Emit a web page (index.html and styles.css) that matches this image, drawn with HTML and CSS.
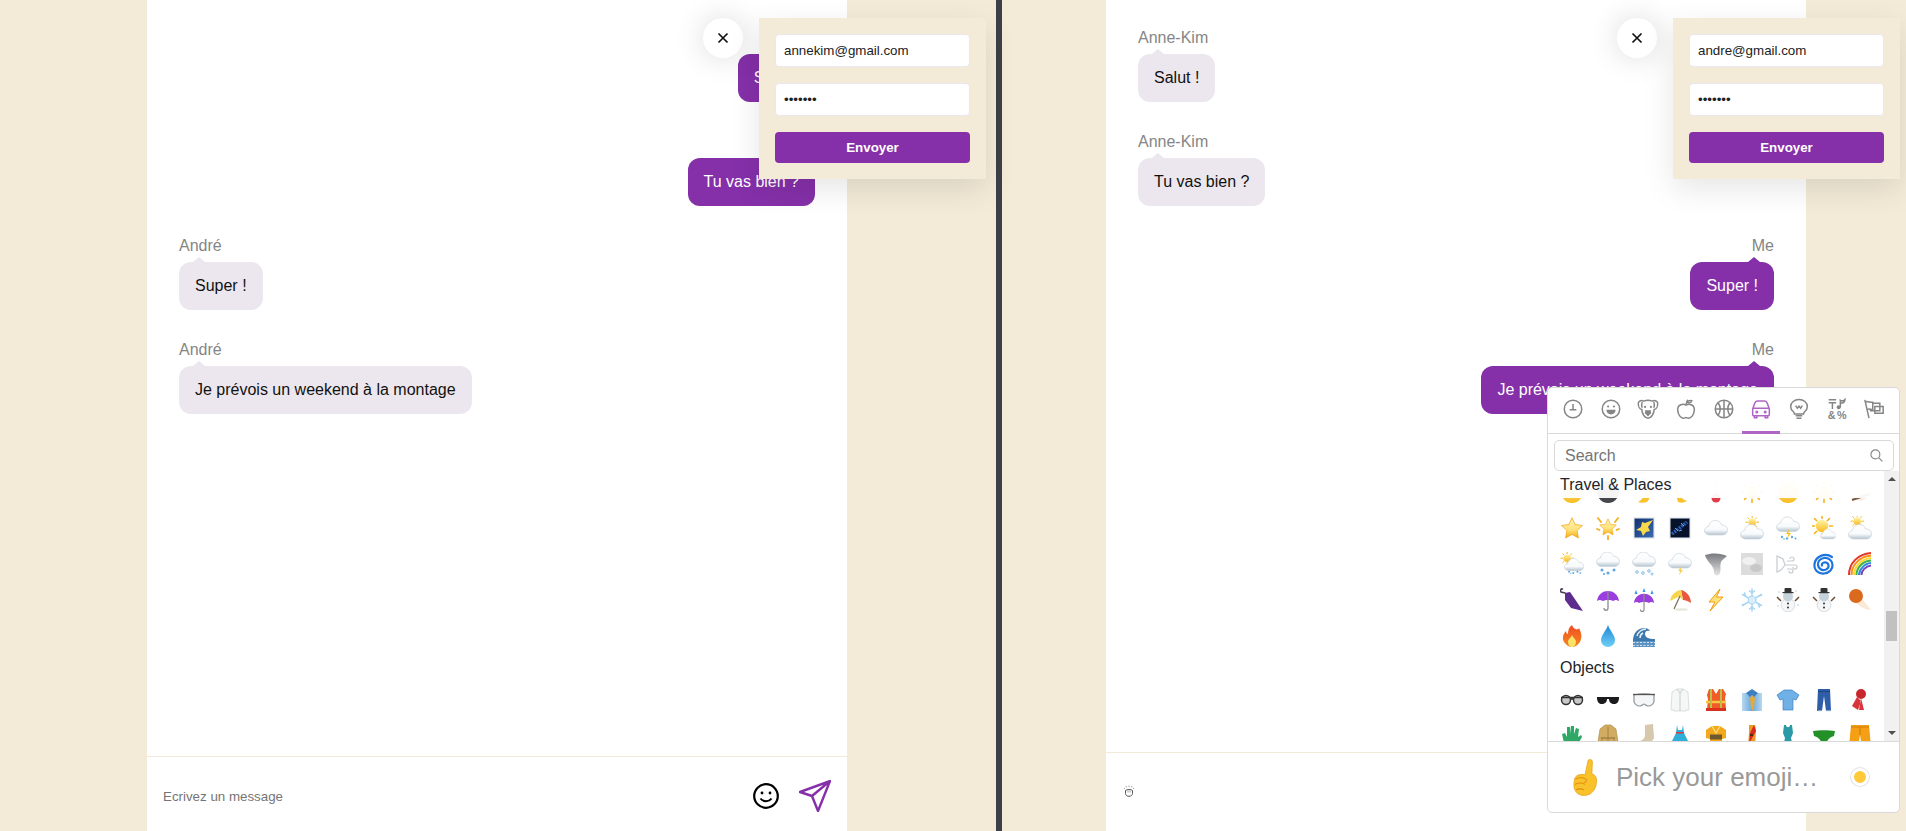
FILE: index.html
```html
<!DOCTYPE html>
<html lang="fr">
<head>
    <meta charset="UTF-8">
    <meta name="viewport" content="width=device-width, initial-scale=1.0">
    <title>Chat</title>
    <link rel="stylesheet" href="styles.css">
</head>
<body>
    <svg class="sprites" aria-hidden="true">
        <defs>
            <linearGradient id="g-cloud" x1="0" y1="0" x2="0" y2="1"><stop offset="0" stop-color="#fff"/><stop offset=".65" stop-color="#f8fafb"/><stop offset="1" stop-color="#b4c4d0"/></linearGradient>
            <linearGradient id="g-star" x1="0" y1="0" x2="0" y2="1"><stop offset="0" stop-color="#fff2b8"/><stop offset=".6" stop-color="#ffe27a"/><stop offset="1" stop-color="#f7a90f"/></linearGradient>
            <linearGradient id="g-sun" x1="0" y1="0" x2="0" y2="1"><stop offset="0" stop-color="#fff3a6"/><stop offset="1" stop-color="#f8bb1d"/></linearGradient>
            <linearGradient id="g-night" x1="0" y1="0" x2="1" y2="1"><stop offset="0" stop-color="#12306e"/><stop offset="1" stop-color="#3a6cb4"/></linearGradient>
            <linearGradient id="g-fire" x1="0" y1="0" x2="0" y2="1"><stop offset="0" stop-color="#ef4b23"/><stop offset="1" stop-color="#f58a1f"/></linearGradient>
            <linearGradient id="g-drop" x1="0" y1="0" x2="0" y2="1"><stop offset="0" stop-color="#1f86d8"/><stop offset="1" stop-color="#6fd0f5"/></linearGradient>
            <linearGradient id="g-shirt" x1="0" y1="0" x2="1" y2="0"><stop offset="0" stop-color="#b7d8ef"/><stop offset=".5" stop-color="#6aa8dc"/><stop offset="1" stop-color="#b7d8ef"/></linearGradient>
            <linearGradient id="g-tornado" x1="0" y1="0" x2="0" y2="1"><stop offset="0" stop-color="#77797d"/><stop offset="1" stop-color="#e4e5e6"/></linearGradient>

            <path id="cloud" d="M6 20.500c-3 0-5.500-1.800-5.500-4.300 0-2.200 1.700-3.900 4-4.200C5 8.500 8 6 11.200 6c3.200 0 5.600 1.800 6.500 4.500.3-.1.500-.1.800-.1 2.800 0 5 2.200 5 5 0 2.900-2.300 5.100-5.300 5.100z" fill="url(#g-cloud)" stroke="#c8d3db" stroke-width=".7"/>
            <g id="sun">
                <g stroke="#f6b21b" stroke-width="1.600" stroke-linecap="round"><path d="M12 1.500v3M12 19.500v3M1.500 12h3M19.500 12h3M4.600 4.600l2.100 2.100M17.300 17.300l2.100 2.100M4.600 19.400l2.100-2.100M17.300 6.700l2.100-2.100"/></g>
                <circle cx="12" cy="12" r="6.200" fill="url(#g-sun)"/>
            </g>
            <path id="star" d="M12 1.800l3.100 6.700 7.300 1-5.300 5.100 1.300 7.300L12 18.400l-6.400 3.500 1.300-7.300-5.300-5.100 7.300-1z" fill="url(#g-star)" stroke="#f2a81c" stroke-width=".8"/>
            <g id="rain"><g fill="#62a8e4"><circle cx="6" cy="21" r="1.200"/><circle cx="11" cy="22.500" r="1.200"/><circle cx="16" cy="21" r="1.200"/><circle cx="19.500" cy="22.500" r="1"/><circle cx="8" cy="23" r=".8"/></g></g>

            <circle id="moon-full" cx="12" cy="12" r="11" fill="url(#g-sun)"/>
            <circle id="moon-new" cx="12" cy="12" r="11" fill="#45464c"/>
            <path id="moon-a" d="M14 1c6 2 8 13 1 21-3 1-7 1-9 0 6-3 10-11 8-21z" fill="#f8c32b"/>
            <path id="moon-b" d="M9 1c-1 8 3 18 10 20-3 2-6 2-9 1C8 16 5 7 9 1z" fill="#f8c32b"/>
            <g id="thermo"><rect x="9.500" y="1" width="5" height="16" fill="#f3ecec"/><circle cx="12" cy="18" r="4.500" fill="#e23b49"/></g>
            <g id="planet"><circle cx="12" cy="12" r="9" fill="#f5efe9"/><path d="M4 20L22 14" stroke="#7a5a41" stroke-width="2.200"/></g>

            <g id="glow"><use href="#star" transform="translate(2.400 1.400) scale(.8)"/><path d="M2 2l3 4M22 2l-3 4M12 20v3.500M1 13l2.500 1M23 13l-2.500 1" stroke="#f6ae1b" stroke-width="1.800" stroke-linecap="round"/></g>
            <g id="night"><rect x="1" y="1" width="22" height="22" fill="#edf0f3"/><rect x="2.500" y="2.500" width="19" height="19" fill="url(#g-night)"/><path d="M21 4l-8 3-3-1-1 5-5 3 5 1 2 5 3-4 4-1-2-4z" fill="#f7d94a"/></g>
            <g id="milky"><rect x="1" y="1" width="22" height="22" fill="#edf0f3"/><rect x="2.500" y="2.500" width="19" height="19" fill="#06122c"/><path d="M4 18L19 6" stroke="#2b5fb0" stroke-width="3.500" stroke-dasharray="2 1"/><path d="M7 12l3 3M13 7l3 3M11 15l3-1" stroke="#6ea2e8" stroke-width="1"/></g>
            <use id="cloud-only" href="#cloud" transform="translate(0 -1.500)"/>
            <g id="sun-cloud"><use href="#sun" transform="translate(5 -1) scale(.6)"/><use href="#cloud" transform="translate(0 2.500)"/></g>
            <g id="storm"><use href="#cloud" transform="translate(0 -5)"/><use href="#rain"/><path d="M13 13l-3 5h2.500l-1.500 5 4-6h-2.500z" fill="#f8c21d"/></g>
            <g id="sun-small"><use href="#sun" transform="translate(-2 -2) scale(1)"/><use href="#cloud" transform="translate(8 9) scale(.68)"/></g>
            <g id="sun-big-cloud"><use href="#sun" transform="translate(2 -2) scale(.6)"/><use href="#cloud" transform="translate(0 2.500)"/></g>

            <g id="sun-rain"><use href="#sun" transform="translate(0 -1) scale(.6)"/><use href="#cloud" transform="translate(4 1.500) scale(.84)"/><use href="#rain" transform="translate(4 2) scale(.84)"/></g>
            <g id="snow-cloud"><use href="#cloud" transform="translate(0 -6)"/><g fill="#5aa6e6"><circle cx="6" cy="18" r="1.500"/><circle cx="12" cy="21" r="1.500"/><circle cx="18" cy="18" r="1.500"/><circle cx="8" cy="22" r="1"/></g></g>
            <g id="sleet-cloud"><use href="#cloud" transform="translate(0 -6)"/><g fill="none" stroke="#86bde8" stroke-width="1"><circle cx="5" cy="20" r="1.300"/><circle cx="11" cy="21" r="1.300"/><circle cx="17" cy="19" r="1.300"/><circle cx="20" cy="22" r="1"/></g></g>
            <g id="light-cloud"><use href="#cloud" transform="translate(0 -4.500)"/><path d="M13 15l-3 4h2l-1 4 4-5h-2z" fill="#f7cf5c"/></g>
            <path id="tornado" d="M1 3c6-2.500 17-2 22 1-3 3-6 4-6.500 8-.4 4 1 7-1.500 11-3 1-5 0-5-3 0-4-2-6-4.500-9C3.500 8 1.500 6 1 3z" fill="url(#g-tornado)"/>
            <g id="fog"><rect x="1" y="1" width="22" height="22" fill="#dcdcdc"/><ellipse cx="9" cy="9" rx="7" ry="4" fill="#f0f0f0"/><ellipse cx="16" cy="16" rx="6" ry="4" fill="#c8c8c8"/></g>
            <g id="wind" fill="none" stroke="#c7ccd1" stroke-width="1.200"><path d="M1 4l6 3 2 6-4 5-4 2zM11 9h5a2 2 0 1 0-2-2M9 13h10a2 2 0 1 1-2 2M11 17h4a2 2 0 1 1-2 2"/></g>
            <path id="cyclone" d="M20 5C14 1 4 3 2.500 12c-.8 6 4 10 9.500 9.500s9-4.500 8.500-9c-.5-4.500-4.500-7-8.500-6.500s-6.500 3.500-6 7 3.500 5.500 6.500 5 4.500-3 4-5-2.500-3-4.500-2.500-2.500 2-2 3" fill="none" stroke="#1c74dd" stroke-width="2.200" stroke-linecap="round"/>
            <g id="rainbow" fill="none" stroke-width="2"><path d="M1 23C1 11 10 2 23 1" stroke="#e5352b"/><path d="M3.500 23C3.500 13 11.500 4.500 23 3.500" stroke="#f79420"/><path d="M6 23C6 15 13 7 23 6" stroke="#fbd92a"/><path d="M8.500 23C8.500 16 14.500 9 23 8.500" stroke="#3fb24a"/><path d="M11 23C11 18 16 11.500 23 11" stroke="#2f8ae0"/><path d="M13.500 23C13.500 19 17.500 14 23 13.500" stroke="#7a45b8"/></g>

            <g id="closed-umbrella"><path d="M5 5l5-1 13 19-12-3-6-8z" fill="#5e2c8f"/><path d="M5 5L1 4c-1-2 0-3.500 1.500-3" fill="none" stroke="#4c3b58" stroke-width="1.500" stroke-linecap="round"/></g>
            <g id="umbrella"><path d="M1 13C2 6 7 3 12 3s10 3 11 10c-3-1.500-4-1.500-5.500 0-2-1.500-8-1.500-11 0C5 11.500 3 11.500 1 13z" fill="#9b3ee0"/><path d="M12 3v17c0 3-4 3-4 0" fill="none" stroke="#8d8d8d" stroke-width="1.300"/></g>
            <g id="umbrella-rain"><use href="#umbrella" transform="translate(1 3) scale(.92)"/><g fill="#3d94e8"><path d="M4 2L2.500 6h3zM12 0l-1.500 4h3zM20 2l-1.500 4h3z"/></g></g>
            <g id="beach"><path d="M2 13C3 6 9 2 13 2l-3 7z" fill="#f7d44a"/><path d="M13 2c5 1 10 6 10 13-3-2-6-3-8-3z" fill="#e9573f"/><path d="M10 9l3-7 2 10c-2-2-3-3-5-3z" fill="#f7d44a"/><path d="M12 8L6 21" stroke="#7a6a55" stroke-width="1.200"/><ellipse cx="13" cy="21.500" rx="7" ry="1.300" fill="#e8e6df"/></g>
            <path id="zap" d="M16 1L5 14h6L6 23 19 9h-6.500z" fill="#fde37a" stroke="#f39c12"/>
            <g id="flake" stroke="#a9d6f2" stroke-width="1.600" stroke-linecap="round"><path d="M12 1v22M2.500 6.500l19 11M2.500 17.500l19-11M12 5l-2.500-2M12 5l2.500-2M12 19l-2.500 2M12 19l2.500 2M5.500 8l-.8-3M18.500 16l.8 3M5.500 16l-3 .7M18.500 8l3-.7"/><circle cx="12" cy="12" r="4" fill="#d8eefa" stroke-width="1"/></g>
            <g id="snowman"><path d="M5 13L1 9M19 13l4-4" stroke="#6b4a2f" stroke-width="1.500"/><circle cx="12" cy="17" r="6.800" fill="#f4f6f8" stroke="#c3ccd4" stroke-width=".6"/><circle cx="12" cy="8.500" r="5" fill="#c6d2da"/><rect x="8.500" y="0" width="7" height="4.500" rx="1" fill="#333"/><rect x="6.500" y="4" width="11" height="1.200" fill="#333"/><circle cx="12" cy="15.500" r="1" fill="#333"/><circle cx="12" cy="19.500" r="1" fill="#333"/></g>
            <g id="snowman-snow"><use href="#snowman"/><g fill="#a9d0ee"><circle cx="3" cy="4" r=".8"/><circle cx="20" cy="3" r=".8"/><circle cx="2" cy="18" r=".8"/><circle cx="22" cy="17" r=".8"/></g></g>
            <g id="comet"><path d="M7 2l16 20c-7 0-16-6-19-13z" fill="#fbe9d6"/><circle cx="8" cy="8" r="7" fill="#d96a1e"/></g>

            <g id="fire"><path d="M12 1c1 4 6 6 7 3 3 6 3 10 1 14-2 3-5 5-8 5s-6-2-8-5C2 14 3 10 6 7c0 2 1 3 2 3 0-4 1-7 4-9z" fill="url(#g-fire)"/><path d="M12 11c1 3 4 4 4 7s-2 5-4 5-4-2-4-5 3-4 4-7z" fill="#fde36a"/></g>
            <path id="drop" d="M12 1c2 6 7 10 7 15a7 7 0 0 1-14 0c0-5 5-9 7-15z" fill="url(#g-drop)"/>
            <g id="wave"><rect x="1" y="15" width="22" height="8" fill="#5d93c2"/><path d="M1 17c0-8 5-13 11-13 3 0 5 1 6 3-3-1-5 0-5 3 0 3 3 5 10 5v2z" fill="#3f78ac"/><path d="M5 12c1-4 5-7 9-7M8 14c0-2 1-4 3-5" fill="none" stroke="#e7f0f6" stroke-width="1.500"/><path d="M1 18.500h22M1 21.500h22" stroke="#d4e5f1" stroke-dasharray="2 1.500"/></g>

            <g id="glasses"><circle cx="6" cy="12" r="4.500" fill="#c8c8c8" stroke="#333" stroke-width="1.500"/><circle cx="18" cy="12" r="4.500" fill="#c8c8c8" stroke="#333" stroke-width="1.500"/><path d="M1 9.500h22M10 11h4" stroke="#333" stroke-width="1.500"/></g>
            <g id="sunglasses"><path d="M1 9h22v1.500c-.5 4-2 5.500-5 5.500-3.500 0-5-2.500-5-5h-2c0 2.500-1.500 5-5 5-3 0-4.500-1.500-5-5.500z" fill="#1c1c1e"/></g>
            <g id="goggles"><path d="M2 7c6-1.500 14-1.500 20 0v6c0 3-3 5-6 5-2 0-3-2-4-2s-2 2-4 2c-3 0-6-2-6-5z" fill="#f4f7f8" stroke="#8f9498" stroke-width="1.200"/><path d="M1 6.500h22" stroke="#555" stroke-width="1.300"/></g>
            <g id="coat-white"><path d="M9 1h6l5 3 1 18h-3v1H6v-1H3L4 4z" fill="#f5f6f6" stroke="#d4d7d9" stroke-width=".8"/><path d="M12 5v18M9 1l3 4 3-4" fill="none" stroke="#bfc3c6" stroke-width=".8"/></g>
            <g id="vest"><path d="M5 1l4 0 3 5 3-5h4l3 5-1 4 1 11-9 1-1-1-9 1 1-11-1-4z" fill="#f25a27"/><path d="M2 14h20" stroke="#f9c642" stroke-width="2.500"/><path d="M7 1v21M17 1v21" stroke="#b9c24a" stroke-width="2"/><rect x="2" y="20" width="20" height="3" fill="#d8321f"/></g>
            <g id="shirt"><rect x="2" y="5" width="20" height="18" fill="url(#g-shirt)"/><path d="M6 5l6-4 6 4-4 4-2-2-2 2z" fill="#3e7fc1"/><path d="M12 7l-2 3 1 10 1.500 3 1.500-3 1-10z" fill="#e5a83a"/></g>
            <path id="tshirt" d="M8 2h8l7 5-3 5-3-1v11H7V11l-3 1-3-5z" fill="#6fb1e6" stroke="#3f83c4" stroke-width=".7"/>
            <g id="jeans"><path d="M6 1h12l1 22h-5l-2-15-2 15H5z" fill="#2f5ea8"/><path d="M6 3.500h12" stroke="#1f4484" stroke-width="1"/><path d="M6 23h4M14 23h5" stroke="#dde7f2"/></g>
            <g id="scarf"><circle cx="13" cy="6" r="5" fill="#c9272f"/><path d="M9 9l-5 9 6 4 3-9zM13 10l3 12h-5z" fill="#d8363c"/></g>

            <path id="gloves" d="M5 23L2 10l3-1 2 4V3h3v7l1-8h3l0 8 2-6 3 1-1 8 3-2 1 2-4 7-1 3z" fill="#2fa866"/>
            <g id="coat-tan"><path d="M9 1h6l5 4 2 13-3 1-1-5v9H6v-9l-1 5-3-1 2-13z" fill="#d2ab62" stroke="#a8843f" stroke-width=".6"/><path d="M5 14h14" stroke="#8e6d34"/><path d="M12 3v20" stroke="#9a7a3c" stroke-width=".8"/></g>
            <path id="socks" d="M13 1l8-1 1 14-3 5c-3 3-9 4-17 4 0-3 2-5 6-6 3-1 5-3 5-6z" fill="#d6c8ad"/>
            <g id="dress"><path d="M9 1l1 5h4l1-5 1 8 7 14H1L8 9z" fill="#2faed8"/><rect x="8" y="8" width="8" height="1.500" fill="#d83a48"/></g>
            <g id="kimono"><path d="M2 6l6-4h8l6 4v8l-4 1v8H6v-8l-4-1z" fill="#f5a81c"/><rect x="6" y="10.500" width="12" height="5" fill="#6e5a2c"/><path d="M8 2l4 7 4-7" fill="none" stroke="#f9e17a" stroke-width="1.300"/></g>
            <g id="sari"><path d="M9 1h6l1 5-1 17H8L9 8z" fill="#ef9b1f"/><path d="M14 1l2 6-7 13 1-11z" fill="#d8281f"/><rect x="10" y="10" width="3" height="2" fill="#4c2b12"/></g>
            <path id="swimsuit" d="M8 1h2c0 3 4 3 4 0h2l1 8-2 5 2 9H7l2-9-2-5z" fill="#2a9aa6"/>
            <path id="briefs" d="M1 7c6-1 16-1 22 0l-1 5c-4 1-7 4-8 8h-4c-1-4-4-7-8-8z" fill="#239128"/>
            <g id="shorts"><path d="M3 1h18l2 22h-9l-2-12-2 12H1z" fill="#f49f14"/><path d="M3 3h18" stroke="#d27e0a"/><path d="M12 3v8" stroke="#c97a0c"/></g>

            <g id="hand"><path d="M15 2c1.500-1.300 4-.5 4 1.500L18.500 15c3 1 4.500 3 4.500 6.500 0 8-5 14-12 14C5 35.500 1.500 31 1.500 26c0-4 .5-7 2-8.500 2-2 6-2.500 8.500-1.500z" fill="#f9c22b" stroke="#e89f12" stroke-width=".7"/><path d="M3 20c3-1.500 7-1.500 10 0 1 2 0 3-2 3M2.500 25c3-1.500 7-1.500 9.500 0M3.500 30c2.500-1 5-1 7.500 0" fill="none" stroke="#e08f0c" stroke-width="1"/></g>
        </defs>
    </svg>

    <div class="split">
        <section class="pane pane-left">
            <div class="chat">
                <div class="messages">
                    <div class="message mine">
                        <div class="sender">Me</div>
                        <div class="bubble">Salut !</div>
                    </div>
                    <div class="message mine">
                        <div class="sender">Me</div>
                        <div class="bubble">Tu vas bien ?</div>
                    </div>
                    <div class="message">
                        <div class="sender">André</div>
                        <div class="bubble">Super !</div>
                    </div>
                    <div class="message">
                        <div class="sender">André</div>
                        <div class="bubble">Je prévois un weekend à la montage</div>
                    </div>
                </div>
                <div class="composer">
                    <input class="composer-input" type="text" placeholder="Ecrivez un message">
                    <svg class="smile-icon" viewBox="0 0 26 26"><ellipse cx="13" cy="13" rx="11.800" ry="11.800" fill="none" stroke="#000" stroke-width="2.200"/><circle cx="9" cy="10" r="1.400"/><circle cx="17" cy="10" r="1.400"/><path d="M7.500 15.500c2.500 3.500 8.500 3.500 11 0" fill="none" stroke="#000" stroke-width="2"/></svg>
                    <svg class="send-icon" viewBox="0 0 32 32"><path d="M31 1L1 12l12 4 6 15zM31 1L13 16" fill="none" stroke="#8530a9" stroke-width="2.400" stroke-linejoin="round"/></svg>
                </div>
            </div>
            <div class="login">
                <button class="close-btn" type="button"><svg viewBox="0 0 12 12"><path d="M1.500 1.500l9 9M10.500 1.500l-9 9" stroke="#111" stroke-width="1.700"/></svg></button>
                <form class="login-form">
                    <input class="login-input" type="text" value="annekim@gmail.com">
                    <input class="login-input" type="password" value="azerty1">
                    <button class="login-submit" type="button">Envoyer</button>
                </form>
            </div>
        </section>

        <div class="divider"></div>

        <section class="pane pane-right">
            <div class="chat">
                <div class="messages">
                    <div class="message">
                        <div class="sender">Anne-Kim</div>
                        <div class="bubble">Salut !</div>
                    </div>
                    <div class="message">
                        <div class="sender">Anne-Kim</div>
                        <div class="bubble">Tu vas bien ?</div>
                    </div>
                    <div class="message mine">
                        <div class="sender">Me</div>
                        <div class="bubble">Super !</div>
                    </div>
                    <div class="message mine">
                        <div class="sender">Me</div>
                        <div class="bubble">Je prévois un weekend à la montage</div>
                    </div>
                </div>
                <div class="composer composer-tall">
                    <div class="composer-draft">
                        <svg class="draft-glyph" viewBox="0 0 12 12"><path d="M2.500 5.500v3c0 1.600 1.500 2.800 3.500 2.800s3.500-1.200 3.500-2.800v-3c-1-1.300-6-1.300-7 0z" fill="#fff" stroke="#444" stroke-width=".9"/><path d="M1 3l1 1M3 1l.6 1.400M6 .5v1.600M9 1l-.6 1.400M11 3l-1 1M5 5.500v2M7 5.500v2" stroke="#888" stroke-width=".8"/></svg>
                    </div>
                    <svg class="smile-icon" viewBox="0 0 26 26"><circle cx="13" cy="13" r="11.800" fill="none" stroke="#000" stroke-width="2.200"/></svg>
                    <svg class="send-icon" viewBox="0 0 32 32"><path d="M31 1L1 12l12 4 6 15zM31 1L13 16" fill="none" stroke="#8530a9" stroke-width="2.400" stroke-linejoin="round"/></svg>
                </div>
            </div>
            <div class="login">
                <button class="close-btn" type="button"><svg viewBox="0 0 12 12"><path d="M1.500 1.500l9 9M10.500 1.500l-9 9" stroke="#111" stroke-width="1.700"/></svg></button>
                <form class="login-form">
                    <input class="login-input" type="text" value="andre@gmail.com">
                    <input class="login-input" type="password" value="azerty1">
                    <button class="login-submit" type="button">Envoyer</button>
                </form>
            </div>

            <div class="picker">
                <nav class="picker-nav">
                    <span class="nav-item"><svg viewBox="0 0 24 24"><circle cx="12" cy="12" r="10.500"/><path d="M12 6v6.500M8 12.800h8"/></svg></span>
                    <span class="nav-item"><svg viewBox="0 0 24 24"><circle cx="12" cy="12" r="10.500"/><circle class="solid" cx="8.500" cy="9" r="1.300"/><circle class="solid" cx="15.500" cy="9" r="1.300"/><path class="solid" d="M6.500 13h11c0 3.500-2.500 5.500-5.500 5.500S6.500 16.500 6.500 13z"/></svg></span>
                    <span class="nav-item"><svg viewBox="0 0 24 24"><path d="M7 2.500c3-1.300 7-1.300 10 0 2-1 5-.5 6.500 1.500 .5 4-1 8-4 8.500C19 18 16 23 12 23S5 18 4.500 12.500c-3-.5-4.500-4.500-4-8.500C2 2 5 1.500 7 2.500zM5 3.500c-1 2.500-.5 5 0 7M19 3.500c1 2.500.5 5 0 7"/><circle class="solid" cx="8.500" cy="9.500" r="1.300"/><circle class="solid" cx="15.500" cy="9.500" r="1.300"/><path class="solid" d="M8.500 13.500h7v3.500L12 21l-3.500-4z"/></svg></span>
                    <span class="nav-item"><svg viewBox="0 0 24 24"><path d="M12 7.500c3-2 10-1.500 10 5.500 0 6-4 10-7 10-1.500 0-2-.7-3-.7s-1.500.7-3 .7c-3 0-7-4-7-10 0-7 7-7.500 10-5.500z"/><path d="M12 7c0-3 1-5 2.500-6M13.500 4c1-2 3-2.500 5.500-2-.5 2-3 3.500-5.500 2z"/></svg></span>
                    <span class="nav-item"><svg viewBox="0 0 24 24"><circle cx="12" cy="12" r="10.500"/><path d="M12 1.500v21M1.500 12h21M5 4.500c3 4.500 3 10.500 0 15M19 4.500c-3 4.500-3 10.500 0 15"/></svg></span>
                    <span class="nav-item active"><svg viewBox="0 0 24 24"><path d="M2 12l2.500-7c.5-1.500 1.500-2.500 3-2.500h9c1.500 0 2.500 1 3 2.500L22 12v6.500c0 1-.5 1.500-1.500 1.500h-17C2.500 20 2 19.500 2 18.500zM2.500 11h19M4 20v2.500h3V20M17 20v2.500h3V20"/><circle class="solid" cx="7" cy="15.500" r="1.800"/><circle class="solid" cx="17" cy="15.500" r="1.800"/></svg></span>
                    <span class="nav-item"><svg viewBox="0 0 24 24"><path d="M5 15C2.500 13 2 10.500 2 9a10 8.500 0 0 1 20 0c0 1.500-.5 4-3 6-1 1-1.500 2-1.500 3h-11c0-1-.5-2-1.500-3zM8 20h8M9 23h6M8 8l2 3 2-2.500 2 2.500 2-3"/></svg></span>
                    <span class="nav-item"><svg viewBox="0 0 24 24"><path d="M2 1h9M2 4.500h9M6.500 4.500V12M16 10V1.500c2 1.500 4 .5 5.500-1 0 3-2 4.500-5.500 4.500"/><circle class="solid" cx="14" cy="10" r="2.400"/><text class="nav-glyph" x="1" y="24">&amp;</text><text class="nav-glyph" x="12" y="24">%</text></svg></span>
                    <span class="nav-item"><svg viewBox="0 0 24 24"><path d="M1 1l5 22M2.500 3c3 0 5 1 8 1v8.500c-2.500 0-5-1-6 0M10.500 5H19v9H8l-.5-1.500M13 9h10v8H13z"/></svg></span>
                </nav>
                <div class="picker-search">
                    <input class="search-input" type="text" placeholder="Search">
                    <svg class="search-icon" viewBox="0 0 14 14"><circle cx="5.800" cy="5.800" r="4.800"/><path d="M9.300 9.300l4 4"/></svg>
                </div>
                <div class="picker-body">
                    <div class="emoji-list">
                        <div class="sticky-label">Travel &amp; Places</div>
                        <div class="emoji-grid">
                            <svg class="emoji" viewBox="0 0 24 24"><use href="#moon-full"/></svg>
                            <svg class="emoji" viewBox="0 0 24 24"><use href="#moon-new"/></svg>
                            <svg class="emoji" viewBox="0 0 24 24"><use href="#moon-a"/></svg>
                            <svg class="emoji" viewBox="0 0 24 24"><use href="#moon-b"/></svg>
                            <svg class="emoji" viewBox="0 0 24 24"><use href="#thermo"/></svg>
                            <svg class="emoji" viewBox="0 0 24 24"><use href="#sun"/></svg>
                            <svg class="emoji" viewBox="0 0 24 24"><use href="#moon-full"/></svg>
                            <svg class="emoji" viewBox="0 0 24 24"><use href="#sun"/></svg>
                            <svg class="emoji" viewBox="0 0 24 24"><use href="#planet"/></svg>

                            <svg class="emoji" viewBox="0 0 24 24"><use href="#star"/></svg>
                            <svg class="emoji" viewBox="0 0 24 24"><use href="#glow"/></svg>
                            <svg class="emoji" viewBox="0 0 24 24"><use href="#night"/></svg>
                            <svg class="emoji" viewBox="0 0 24 24"><use href="#milky"/></svg>
                            <svg class="emoji" viewBox="0 0 24 24"><use href="#cloud-only"/></svg>
                            <svg class="emoji" viewBox="0 0 24 24"><use href="#sun-cloud"/></svg>
                            <svg class="emoji" viewBox="0 0 24 24"><use href="#storm"/></svg>
                            <svg class="emoji" viewBox="0 0 24 24"><use href="#sun-small"/></svg>
                            <svg class="emoji" viewBox="0 0 24 24"><use href="#sun-big-cloud"/></svg>

                            <svg class="emoji" viewBox="0 0 24 24"><use href="#sun-rain"/></svg>
                            <svg class="emoji" viewBox="0 0 24 24"><use href="#snow-cloud"/></svg>
                            <svg class="emoji" viewBox="0 0 24 24"><use href="#sleet-cloud"/></svg>
                            <svg class="emoji" viewBox="0 0 24 24"><use href="#light-cloud"/></svg>
                            <svg class="emoji" viewBox="0 0 24 24"><use href="#tornado"/></svg>
                            <svg class="emoji" viewBox="0 0 24 24"><use href="#fog"/></svg>
                            <svg class="emoji" viewBox="0 0 24 24"><use href="#wind"/></svg>
                            <svg class="emoji" viewBox="0 0 24 24"><use href="#cyclone"/></svg>
                            <svg class="emoji" viewBox="0 0 24 24"><use href="#rainbow"/></svg>

                            <svg class="emoji" viewBox="0 0 24 24"><use href="#closed-umbrella"/></svg>
                            <svg class="emoji" viewBox="0 0 24 24"><use href="#umbrella"/></svg>
                            <svg class="emoji" viewBox="0 0 24 24"><use href="#umbrella-rain"/></svg>
                            <svg class="emoji" viewBox="0 0 24 24"><use href="#beach"/></svg>
                            <svg class="emoji" viewBox="0 0 24 24"><use href="#zap"/></svg>
                            <svg class="emoji" viewBox="0 0 24 24"><use href="#flake"/></svg>
                            <svg class="emoji" viewBox="0 0 24 24"><use href="#snowman-snow"/></svg>
                            <svg class="emoji" viewBox="0 0 24 24"><use href="#snowman"/></svg>
                            <svg class="emoji" viewBox="0 0 24 24"><use href="#comet"/></svg>

                            <svg class="emoji" viewBox="0 0 24 24"><use href="#fire"/></svg>
                            <svg class="emoji" viewBox="0 0 24 24"><use href="#drop"/></svg>
                            <svg class="emoji" viewBox="0 0 24 24"><use href="#wave"/></svg>
                        </div>
                        <div class="section-label">Objects</div>
                        <div class="emoji-grid">
                            <svg class="emoji" viewBox="0 0 24 24"><use href="#glasses"/></svg>
                            <svg class="emoji" viewBox="0 0 24 24"><use href="#sunglasses"/></svg>
                            <svg class="emoji" viewBox="0 0 24 24"><use href="#goggles"/></svg>
                            <svg class="emoji" viewBox="0 0 24 24"><use href="#coat-white"/></svg>
                            <svg class="emoji" viewBox="0 0 24 24"><use href="#vest"/></svg>
                            <svg class="emoji" viewBox="0 0 24 24"><use href="#shirt"/></svg>
                            <svg class="emoji" viewBox="0 0 24 24"><use href="#tshirt"/></svg>
                            <svg class="emoji" viewBox="0 0 24 24"><use href="#jeans"/></svg>
                            <svg class="emoji" viewBox="0 0 24 24"><use href="#scarf"/></svg>

                            <svg class="emoji" viewBox="0 0 24 24"><use href="#gloves"/></svg>
                            <svg class="emoji" viewBox="0 0 24 24"><use href="#coat-tan"/></svg>
                            <svg class="emoji" viewBox="0 0 24 24"><use href="#socks"/></svg>
                            <svg class="emoji" viewBox="0 0 24 24"><use href="#dress"/></svg>
                            <svg class="emoji" viewBox="0 0 24 24"><use href="#kimono"/></svg>
                            <svg class="emoji" viewBox="0 0 24 24"><use href="#sari"/></svg>
                            <svg class="emoji" viewBox="0 0 24 24"><use href="#swimsuit"/></svg>
                            <svg class="emoji" viewBox="0 0 24 24"><use href="#briefs"/></svg>
                            <svg class="emoji" viewBox="0 0 24 24"><use href="#shorts"/></svg>
                        </div>
                    </div>
                    <div class="scrollbar">
                        <span class="arrow-up"></span>
                        <span class="thumb"></span>
                        <span class="arrow-down"></span>
                    </div>
                </div>
                <div class="picker-preview">
                    <svg class="preview-hand" viewBox="0 0 24 36"><use href="#hand"/></svg>
                    <span class="preview-text">Pick your emoji…</span>
                    <span class="skin-dot"></span>
                </div>
            </div>
        </section>
    </div>
</body>
</html>
```

FILE: styles.css
```css
* {
    box-sizing: border-box;
}

body {
    margin: 0;
    height: 831px;
    overflow: hidden;
    background-color: #f3ead7;
    font-family: "Liberation Sans", Arial, sans-serif;
    font-size: 16px;
    color: #000;
}

.sprites {
    display: block;
    width: 0;
    height: 0;
}

.split {
    display: flex;
    height: 831px;
}

.pane {
    position: relative;
    height: 831px;
}

.pane-left {
    width: 996px;
    padding-left: 147px;
}

.pane-right {
    flex: 1;
    padding-left: 104px;
}

.divider {
    width: 6px;
    background-color: #3b3f47;
}

/* chat column */
.chat {
    display: flex;
    flex-direction: column;
    width: 700px;
    height: 100%;
    background-color: #fff;
}

.messages {
    flex: 1;
    display: flex;
    flex-direction: column;
    gap: 31px;
    padding: 29px 32px 0;
}

.message {
    display: flex;
    flex-direction: column;
    align-items: flex-start;
}

.message.mine {
    align-items: flex-end;
}

.sender {
    margin-bottom: 7px;
    line-height: 18px;
    color: #858585;
}

.bubble {
    position: relative;
    padding: 16px;
    line-height: 16px;
    border-radius: 12px;
    background-color: #ece7ee;
    color: #111;
}

.bubble::before {
    content: "";
    position: absolute;
    top: -5px;
    left: 14px;
    border-left: 6px solid transparent;
    border-right: 6px solid transparent;
    border-bottom: 5px solid #ece7ee;
}

.mine .bubble {
    background-color: #8530a9;
    color: #fff;
}

.mine .bubble::before {
    left: auto;
    right: 14px;
    border-bottom-color: #8530a9;
}

/* message input bar */
.composer {
    display: flex;
    align-items: center;
    gap: 20px;
    height: 75px;
    padding: 23px 16px 20px;
    border-top: 1px solid #f3ead7;
}

.composer-tall {
    height: 79px;
    padding-bottom: 24px;
}

.composer-input,
.composer-draft {
    flex: 1;
    min-width: 0;
    margin-top: 1px;
    padding: 0;
    border: none;
    outline: none;
    font-family: inherit;
    font-size: 13.33px;
}

.composer-input::placeholder {
    color: #757575;
}

.draft-glyph {
    display: block;
    width: 12px;
    height: 12px;
    margin: -3px 0 0 1px;
}

.smile-icon {
    width: 26px;
    height: 26px;
}

.send-icon {
    width: 32px;
    height: 32px;
}

/* login popup */
.login {
    position: absolute;
    top: 18px;
    display: flex;
    gap: 16px;
}

.pane-left .login {
    left: 703px;
}

.pane-right .login {
    left: 615px;
}

.close-btn {
    display: flex;
    align-items: center;
    justify-content: center;
    width: 40px;
    height: 40px;
    padding: 0;
    border: none;
    border-radius: 50%;
    background-color: #fff;
    box-shadow: 0 0 30px rgba(0, 0, 0, 0.15);
}

.close-btn svg {
    width: 12px;
    height: 12px;
}

.login-form {
    display: flex;
    flex-direction: column;
    gap: 16px;
    width: 227px;
    padding: 16px;
    background-color: #f3ead7;
    box-shadow: 0 10px 30px rgba(0, 0, 0, 0.1);
}

.login-input {
    height: 33px;
    padding: 0 8px;
    border: 1px solid #ece7ee;
    border-radius: 4px;
    background-color: #fff;
    font-family: inherit;
    font-size: 13.33px;
    color: #222;
}

.login-submit {
    height: 31px;
    border: none;
    border-radius: 4px;
    background-color: #8530a9;
    font-family: inherit;
    font-size: 13.33px;
    font-weight: bold;
    color: #fff;
}

/* emoji picker */
.picker {
    position: absolute;
    top: 387px;
    left: 545px;
    display: flex;
    flex-direction: column;
    width: 353px;
    height: 426px;
    border: 1px solid #d9d9d9;
    border-radius: 5px;
    background-color: #fff;
}

.picker-nav {
    display: flex;
    height: 46px;
    padding: 0 6px;
    border-bottom: 1px solid #d9d9d9;
}

.nav-item {
    flex: 1;
    display: flex;
    align-items: center;
    justify-content: center;
    padding-bottom: 2px;
    border-bottom: 3px solid transparent;
    margin-bottom: -1px;
    color: #858585;
}

.nav-item.active {
    border-bottom-color: #ae65c5;
    color: #ae65c5;
}

.nav-item svg {
    width: 20px;
    height: 20px;
    fill: none;
    stroke: currentColor;
    stroke-width: 1.800;
    overflow: visible;
}

.nav-item .solid {
    fill: currentColor;
    stroke: none;
}

.nav-glyph {
    fill: currentColor;
    stroke: none;
    font-family: "Liberation Sans", Arial, sans-serif;
    font-size: 13px;
    font-weight: bold;
}

.picker-search {
    position: relative;
    padding: 6px 5px 0 6px;
    height: 37px;
}

.search-input {
    display: block;
    width: 100%;
    height: 31px;
    padding: 0 28px 0 10px;
    border: 1px solid #d9d9d9;
    border-radius: 5px;
    font-family: inherit;
    font-size: 16px;
}

.search-input::placeholder {
    color: #757575;
}

.search-icon {
    position: absolute;
    top: 15px;
    right: 16px;
    width: 13px;
    height: 13px;
    fill: none;
    stroke: #858585;
    stroke-width: 1.200;
}

.picker-body {
    display: flex;
    height: 270px;
}

.emoji-list {
    position: relative;
    flex: 1;
    min-width: 0;
    overflow: hidden;
    padding: 3px 0 0 6px;
}

.sticky-label {
    position: absolute;
    top: 0;
    left: 0;
    right: 0;
    height: 27px;
    padding-left: 12px;
    line-height: 27px;
    background-color: rgba(255, 255, 255, 0.95);
    color: #222427;
}

.section-label {
    height: 28px;
    padding-left: 6px;
    line-height: 28px;
    color: #222427;
}

.emoji-grid {
    display: grid;
    grid-template-columns: repeat(9, 36px);
    grid-auto-rows: 36px;
    place-items: center;
}

.emoji {
    width: 24px;
    height: 24px;
}

.scrollbar {
    display: flex;
    flex-direction: column;
    align-items: center;
    width: 15px;
    padding: 6px 0;
    background-color: #f1f1f1;
}

.arrow-up {
    border-left: 4px solid transparent;
    border-right: 4px solid transparent;
    border-bottom: 4px solid #505050;
}

.arrow-down {
    margin-top: auto;
    border-left: 4px solid transparent;
    border-right: 4px solid transparent;
    border-top: 4px solid #505050;
}

.thumb {
    width: 11px;
    height: 30px;
    margin-top: 130px;
    background-color: #c1c1c1;
}

.picker-preview {
    display: flex;
    align-items: center;
    flex: 1;
    padding: 0 30px 0 24px;
    border-top: 1px solid #d9d9d9;
}

.preview-hand {
    width: 26px;
    height: 38px;
}

.preview-text {
    flex: 1;
    margin-left: 18px;
    font-size: 26px;
    color: #999;
}

.skin-dot {
    width: 18px;
    height: 18px;
    border: 3px solid #fff;
    border-radius: 50%;
    background-color: #ffc93a;
    box-shadow: 0 0 0 1px #e4e4e4;
}
```
